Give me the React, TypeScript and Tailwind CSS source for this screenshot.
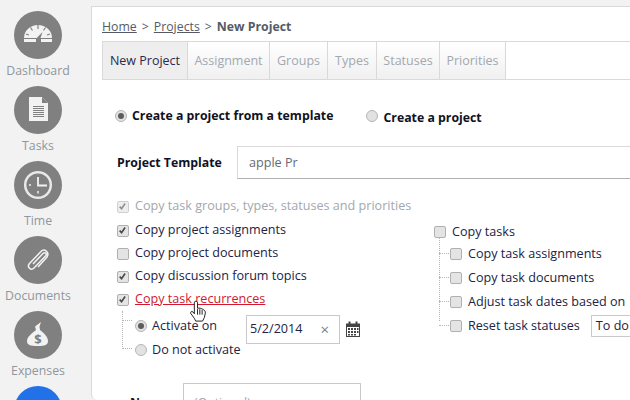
import React from "react";

const font = { fontFamily: '"Open Sans", "Noto Sans", sans-serif' };

function Check({ checked, faded }: { checked?: boolean; faded?: boolean }) {
  return (
    <span className={`relative inline-block w-[12px] h-[12px] shrink-0 rounded-[2px] border border-[#b0b0b0] bg-[#e4e4e4] ${faded ? "opacity-60" : ""}`}>
      {checked && (
        <svg viewBox="0 0 12 12" className="absolute left-0 top-0 w-[10px] h-[10px]">
          <path d="M2 5.5 L4.3 8 L8.5 1.8" fill="none" stroke="#4a4a4a" strokeWidth="2" />
        </svg>
      )}
    </span>
  );
}

function Radio({ on }: { on?: boolean }) {
  return (
    <span className="flex items-center justify-center w-[12px] h-[12px] shrink-0 rounded-full border border-[#b5b5b5] bg-[#e2e2e2]">
      {on && <span className="w-[6px] h-[6px] rounded-full bg-[#5c5c5c]" />}
    </span>
  );
}

function CheckRow({ label, checked, className = "" }: { label: React.ReactNode; checked?: boolean; className?: string }) {
  return (
    <div className={`flex items-center gap-[6px] h-[23px] text-[12.6px] text-[#222244] ${className}`}>
      <Check checked={checked} />
      <span className="whitespace-nowrap">{label}</span>
    </div>
  );
}

function Nav({ label, children }: { label: string; children: React.ReactNode }) {
  return (
    <div className="flex flex-col items-center h-[75px] w-[76px]">
      <div className="w-[48px] h-[48px] rounded-full bg-[#808080] flex items-center justify-center shrink-0">{children}</div>
      <div className="text-[12.3px] leading-[16px] mt-[4px] text-[#8f979e]">{label}</div>
    </div>
  );
}

const tabs = [
  ["New Project", "w-[86px]"],
  ["Assignment", "w-[82px]"],
  ["Groups", "w-[58px]"],
  ["Types", "w-[49px]"],
  ["Statuses", "w-[63px]"],
  ["Priorities", "w-[66px]"],
];

export default function App() {
  return (
    <div style={font} className="relative w-[630px] h-[400px] overflow-hidden bg-[#f2f2f2] flex">
      <div className="w-[91px] shrink-0 pt-[11px]">
        <Nav label="Dashboard">
          <svg viewBox="0 0 48 48" className="w-[48px] h-[48px]">
            <path d="M10 27 A14 13 0 0 1 38 27 Z" fill="#f2f2f2" />
            <rect x="10" y="28" width="12" height="3" fill="#f2f2f2" />
            <rect x="27" y="28" width="11" height="3" fill="#f2f2f2" />
            <path d="M24 14v4M16.500 16.500l2 3M31.500 16.500l-2 3M12 23l3 1M36 23l-3 1" stroke="#808080" strokeWidth="1.2" />
            <path d="M28.500 21 L22.800 27 L23.500 31 L25.500 30 Z" fill="#808080" />
          </svg>
        </Nav>
        <Nav label="Tasks">
          <svg viewBox="0 0 48 48" className="w-[48px] h-[48px]">
            <path d="M15 11 H28 L34 17 V35 H15 Z" fill="#f2f2f2" />
            <path d="M28 11 L34 17 H28 Z" fill="#808080" />
            <path d="M19 20.500H30M19 22.500H30M19 24.500H30M19 26.500H30M19 28.500H30M19 30.500H30" stroke="#808080" strokeWidth="1" />
          </svg>
        </Nav>
        <Nav label="Time">
          <svg viewBox="0 0 48 48" className="w-[48px] h-[48px]">
            <circle cx="24" cy="24" r="12.800" fill="none" stroke="#e8e8e8" strokeWidth="2.500" />
            <path d="M24 16V24.500H33" fill="none" stroke="#f2f2f2" strokeWidth="1.800" />
            <path d="M24 30v2.500M15 24h2" stroke="#f2f2f2" strokeWidth="1.500" />
          </svg>
        </Nav>
        <Nav label="Documents">
          <svg viewBox="0 0 48 48" className="w-[48px] h-[48px]">
            <path d="M19 28 L29 17.500 C31 15.500 33.500 18 31.500 20 L20 32 C17 35 12.500 31 15.500 27.500 L27 15.500 C30 12 36 16 33 21 L24 31" fill="none" stroke="#f2f2f2" strokeWidth="1.500" />
          </svg>
        </Nav>
        <Nav label="Expenses">
          <svg viewBox="0 0 48 48" className="w-[48px] h-[48px]">
            <path d="M22 19 L21 15.500 L27 11 L25.500 15.500 L26 19 C30 22 34 26 34 30 C34 34 31 35 24 35 C16 35 13 34 13 30 C13 26 18 22 22 19 Z" fill="#f2f2f2" />
            <text x="24" y="33" textAnchor="middle" fontSize="13" fontWeight="700" fill="#808080" fontFamily="Open Sans">$</text>
          </svg>
        </Nav>
        <div className="w-[76px] flex justify-center">
          <div className="w-[48px] h-[48px] rounded-full bg-[#2271e8]" />
        </div>
      </div>

      <div className="flex-1 mt-[6px] border-t border-l border-[#d9d9d9] bg-white rounded-bl-[6px] pl-[10px] relative overflow-hidden">
        <div className="h-[34px] flex items-center pt-[6px] text-[12.300px] text-[#555b66] whitespace-nowrap">
          <span className="underline">Home</span>
          <span className="mx-[5px]">&gt;</span>
          <span className="underline">Projects</span>
          <span className="mx-[5px]">&gt;</span>
          <span className="font-bold">New Project</span>
        </div>

        <div className="flex h-[39px] border-y border-[#d9d9d9] text-[12.500px] text-[#a2a8ae] -mr-[1px]">
          {tabs.map(([t, w], i) => (
            <div
              key={t}
              className={`${w} shrink-0 flex items-center justify-center pt-[1px] border-r border-[#d9d9d9] ${i === 0 ? "bg-[#eeeeee] text-[#2a2a4a] border-l" : "bg-gradient-to-b from-white to-[#f0f0f0]"}`}
            >
              {t}
            </div>
          ))}
        </div>

        <div className="flex items-center h-[30px] mt-[21px] pl-[13px] text-[12.300px] font-bold text-[#111122] whitespace-nowrap">
          <Radio on />
          <span className="ml-[5px]">Create a project from a template</span>
          <span className="ml-[33px]"><Radio /></span>
          <span className="ml-[5px] mt-[4px]">Create a project</span>
        </div>

        <div className="flex items-center h-[33px] mt-[15px] pl-[15px] whitespace-nowrap">
          <span className="w-[120px] pt-[2px] text-[12.300px] font-bold text-[#111122]">Project Template</span>
          <div className="flex-1 h-[33px] border border-[#d9d9d9] border-b-[#b0b0b0] border-r-0 flex items-center pl-[11px] pt-[2px] text-[12.600px] text-[#666a75]">apple Pr</div>
        </div>

        <div className="mt-[16px] pl-[15px] flex items-center gap-[6px] h-[23px] text-[12.600px] text-[#a2a8ae] whitespace-nowrap">
          <Check checked faded />
          <span>Copy task groups, types, statuses and priorities</span>
        </div>

        <div className="flex mt-[1px]">
          <div className="w-[332px] shrink-0 pl-[15px]">
            <CheckRow checked label="Copy project assignments" />
            <CheckRow label="Copy project documents" />
            <CheckRow checked label="Copy discussion forum topics" />
            <CheckRow checked label={<span className="text-[#d2192f] underline">Copy task recurrences</span>} />
            <div className="relative pl-[18px] pt-[3px]">
              <div className="absolute left-[5px] top-[0px] h-[38px] w-[12px] border-l border-dotted border-[#b5b5b5]" />
              <div className="absolute left-[5px] top-[9px] w-[10px] border-t border-dotted border-[#b5b5b5]" />
              <div className="absolute left-[5px] top-[37px] w-[10px] border-t border-dotted border-[#b5b5b5]" />
              <div className="flex items-center h-[24px] text-[12.600px] text-[#222244] whitespace-nowrap">
                <Radio on />
                <span className="ml-[5px] w-[94px]">Activate on</span>
                <div className="w-[94px] h-[29px] border border-[#c9c9c9] flex items-center justify-between pl-[3px] pr-[10px] mt-[7px]">
                  <span className="text-[#222244]">5/2/2014</span>
                  <span className="text-[#7c8088] text-[15px]">×</span>
                </div>
                <svg viewBox="0 0 16 16" className="w-[16px] h-[16px] ml-[5px] mt-[5px]">
                  <path d="M1 2.500H15V16H1Z" fill="#444" />
                  <rect x="3.500" y="0.500" width="2" height="3.500" fill="#444" />
                  <rect x="10.500" y="0.500" width="2" height="3.500" fill="#444" />
                  <path d="M2 6h12v9H2z" fill="#fff" />
                  <path d="M3 7h2v2H3zM6 7h2v2H6zM9 7h2v2H9zM12 7h1.500v2H12zM3 10h2v2H3zM6 10h2v2H6zM9 10h2v2H9zM12 10h1.500v2H12zM6 13h2v1.500H6zM9 13h2v1.500H9zM3 13h2v1.500H3z" fill="#444" />
                </svg>
              </div>
              <div className="flex items-center h-[24px] text-[12.600px] text-[#222244] whitespace-nowrap">
                <Radio />
                <span className="ml-[5px]">Do not activate</span>
              </div>
            </div>
          </div>
          <div className="flex-1 whitespace-nowrap">
            <CheckRow label="Copy tasks" className="pt-[3px]" />
            <div className="relative pl-[16px]">
              <div className="absolute left-[5px] top-[-4px] h-[83px] w-[1px] border-l border-dotted border-[#b5b5b5]" />
              {["Copy task assignments", "Copy task documents", "Adjust task dates based on", "Reset task statuses"].map((t, i) => (
                <div key={t} className="relative flex items-center gap-[6px] h-[24px] text-[12.600px] text-[#222244]">
                  <div className="absolute left-[-11px] top-[11px] w-[10px] border-t border-dotted border-[#b5b5b5]" />
                  <Check />
                  <span>{t}</span>
                  {i === 3 && <div className="ml-[5px] w-[60px] h-[22px] border border-[#c9c9c9] pl-[4px] flex items-center">To do</div>}
                </div>
              ))}
            </div>
          </div>
        </div>

        <div className="flex items-start mt-[21px] pl-[28px] text-[12.300px] whitespace-nowrap">
          <span className="w-[53px] font-bold text-[#111122] mt-[11px]">Name</span>
          <div className="w-[178px] h-[30px] border border-[#c9c9c9] pl-[10px] pt-[10px] text-[#a2a8ae]">(Optional)</div>
        </div>

        <div className="absolute left-[97px] top-[293px]">
          <svg viewBox="0 0 18 24" className="w-[18px] h-[22px]">
            <path d="M6 1.500 C7.500 1 8.500 2 8.500 3 L8.500 9 L10 8.800 L11.500 9 L13 9.500 L15 10.500 C16.500 11.500 17 12.500 17 14 L16 19 L14 23 L6.500 23 L5 20 L1 14.500 C0.500 13 2 12 3.500 13 L5 15 L5 3 C5 2 5.500 1.500 6 1.500 Z" fill="#fff" stroke="#111" strokeWidth="1" />
            <path d="M8.500 10V16M11 10V16M13.500 11V16" stroke="#111" strokeWidth="1" />
          </svg>
        </div>
      </div>
    </div>
  );
}
